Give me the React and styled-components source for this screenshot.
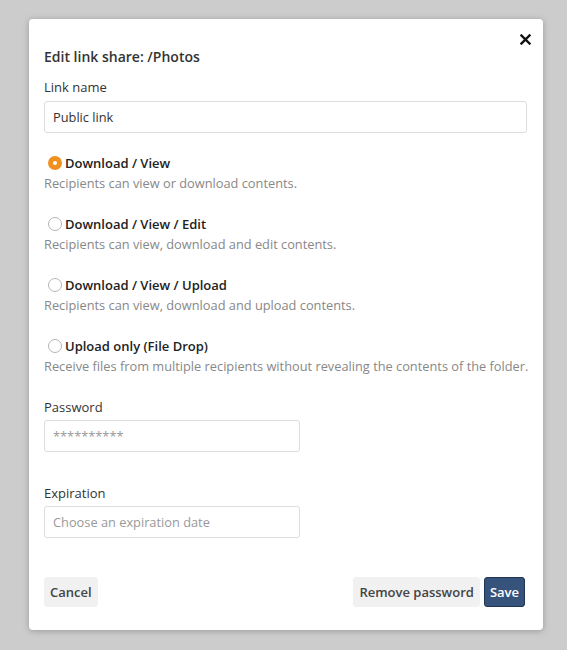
import React, { useState } from 'react';
import styled, { createGlobalStyle } from 'styled-components';

const GlobalStyle = createGlobalStyle`
  html, body {
    margin: 0;
    padding: 0;
    background: #cccccc;
    font-family: "Open Sans", "Liberation Sans", sans-serif;
    color: #333;
  }
  * { box-sizing: border-box; }
`;

const Page = styled.div`
  width: 567px;
  height: 650px;
  padding: 19px 24px 0 29px;
`;

const Modal = styled.div`
  position: relative;
  width: 514px;
  background: #fff;
  border-radius: 4px;
  box-shadow: 0 1px 6px rgba(0, 0, 0, 0.25);
  padding: 28px 16px 23px 15px;
`;

const CloseButton = styled.button`
  position: absolute;
  top: 10px;
  right: 8px;
  width: 20px;
  height: 20px;
  border: 0;
  background: none;
  padding: 0;
  cursor: pointer;
  display: flex;
  align-items: center;
  justify-content: center;
`;

const Title = styled.h2`
  margin: 0 0 11px;
  font-size: 14px;
  font-weight: 600;
  color: #333;
  line-height: 20px;
`;

const Label = styled.div`
  font-size: 13px;
  line-height: 18px;
  color: #333;
  margin-bottom: ${(p) => p.$gap ?? 5}px;
`;

const TextInput = styled.input`
  display: block;
  width: ${(p) => p.$width || '100%'};
  height: 32px;
  border: 1px solid #ddd;
  border-radius: 3px;
  padding: 0 8px;
  font-family: inherit;
  font-size: 12.8px;
  color: #333;
  outline: none;

  &::placeholder {
    color: #999;
  }
`;

const Options = styled.div`
  margin-top: 20px;
  display: flex;
  flex-direction: column;
  gap: 21px;
`;

const Option = styled.label`
  display: block;
  cursor: pointer;
`;

const OptionHead = styled.div`
  display: flex;
  align-items: center;
  height: 20px;
  padding-left: 4px;
`;

const Radio = styled.span`
  width: 14px;
  height: 14px;
  border-radius: 50%;
  margin-right: 3px;
  flex: none;
  ${(p) =>
    p.$checked
      ? `
    background: #f0901e;
    position: relative;
    &::after {
      content: '';
      position: absolute;
      left: 5px;
      top: 5px;
      width: 4px;
      height: 4px;
      border-radius: 50%;
      background: #fff;
    }
  `
      : `
    background: #fff;
    border: 1px solid #b5b5b5;
  `}
`;

const OptionTitle = styled.span`
  font-size: 13px;
  font-weight: 600;
  color: #222;
`;

const OptionDesc = styled.div`
  font-size: 12.8px;
  line-height: 20px;
  color: #888;
  white-space: nowrap;
`;

const Field = styled.div`
  margin-top: ${(p) => p.$top || 0}px;
`;

const Footer = styled.div`
  margin-top: 39px;
  padding-right: 2px;
  display: flex;
  align-items: center;
`;

const Spacer = styled.div`
  flex: 1;
`;

const Button = styled.button`
  height: 30px;
  padding: 0 5px;
  border-radius: 3px;
  font-family: inherit;
  font-size: 13px;
  font-weight: 600;
  cursor: pointer;
  border: 1px solid ${(p) => (p.$primary ? '#1f3555' : '#f1f1f1')};
  background: ${(p) => (p.$primary ? '#36537c' : '#f1f1f1')};
  color: ${(p) => (p.$primary ? '#fff' : '#444')};
  margin-left: ${(p) => p.$gap || 0}px;
`;

const options = [
  { id: 'view', title: 'Download / View', desc: 'Recipients can view or download contents.' },
  { id: 'edit', title: 'Download / View / Edit', desc: 'Recipients can view, download and edit contents.' },
  { id: 'upload', title: 'Download / View / Upload', desc: 'Recipients can view, download and upload contents.' },
  {
    id: 'drop',
    title: 'Upload only (File Drop)',
    desc: 'Receive files from multiple recipients without revealing the contents of the folder.',
  },
];

export default function App() {
  const [selected, setSelected] = useState('view');

  return (
    <Page>
      <GlobalStyle />
      <Modal>
        <CloseButton aria-label="Close">
          <svg width="11" height="11" viewBox="0 0 11 11">
            <path d="M1.5 1.5L9.5 9.5M9.5 1.5L1.5 9.5" stroke="#111" strokeWidth="2.4" strokeLinecap="square" />
          </svg>
        </CloseButton>
        <Title>Edit link share: /Photos</Title>

        <Label>Link name</Label>
        <TextInput defaultValue="Public link" />

        <Options>
          {options.map((o) => (
            <Option key={o.id} onClick={() => setSelected(o.id)}>
              <OptionHead>
                <Radio $checked={selected === o.id} />
                <OptionTitle>{o.title}</OptionTitle>
              </OptionHead>
              <OptionDesc>{o.desc}</OptionDesc>
            </Option>
          ))}
        </Options>

        <Field $top={22}>
          <Label $gap={4}>Password</Label>
          <TextInput $width="256px" placeholder="**********" />
        </Field>

        <Field $top={32}>
          <Label $gap={4}>Expiration</Label>
          <TextInput $width="256px" placeholder="Choose an expiration date" />
        </Field>

        <Footer>
          <Button>Cancel</Button>
          <Spacer />
          <Button>Remove password</Button>
          <Button $primary $gap={4}>Save</Button>
        </Footer>
      </Modal>
    </Page>
  );
}
